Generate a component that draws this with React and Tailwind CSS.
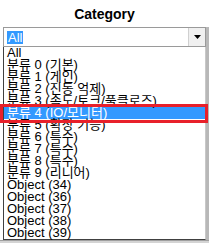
const items = [
  'All',
  '분류 0 (기본)',
  '분류 1 (게인)',
  '분류 2 (진동 억제)',
  '분류 3 (속도/토크/풀클로즈)',
  '분류 4 (IO/모니터)',
  '분류 5 (확장 기능)',
  '분류 6 (특수)',
  '분류 7 (특수)',
  '분류 8 (특수)',
  '분류 9 (리니어)',
  'Object (34)',
  'Object (36)',
  'Object (37)',
  'Object (38)',
  'Object (39)',
]

const selected = 5

export default function App() {
  return (
    <div
      className="relative w-[209px] h-[243px] overflow-hidden bg-white text-black"
      style={{ fontFamily: '"Liberation Sans", "Noto Sans CJK KR", sans-serif' }}
    >
      <div className="h-[27px] flex items-center justify-center text-[14px] font-bold pt-[1px]">
        Category
      </div>

      <div className="flex">
        <div className="w-[3px] bg-white" />
        <div className="w-[203px]">
          {/* closed select */}
          <div className="h-[20px] flex border border-[#9a9a9a]">
            <div className="flex-1 flex items-center pl-[3px] pt-[1px]">
              <span className="bg-[#3399ff] text-white text-[13px] leading-[13px] px-[1px]">All</span>
            </div>
            <div className="w-[17px] flex items-center justify-center bg-[#f0f0f0] border-l border-[#d0d0d0]">
              <svg width="7" height="4" viewBox="0 0 7 4">
                <path d="M0 0H7L3.5 4Z" fill="#000" />
              </svg>
            </div>
          </div>

          {/* open list */}
          <div className="border border-t-0 border-l-[#404040] border-r-[#c8c8c8] border-b-[#404040] bg-white">
            {items.map((item, i) => (
              <div
                key={item}
                className={`h-[12px] flex items-center pl-[3px] text-[13px] leading-[12px] whitespace-nowrap ${
                  i === selected ? 'bg-[#3399ff] text-white' : ''
                }`}
              >
                {item}
              </div>
            ))}
          </div>
        </div>
        <div className="w-[3px] bg-[#b8b8b8]" />
      </div>

      <div className="h-[10px] bg-[#d4d4d4] border-t border-[#a0a0a0]" />

      {/* red highlight annotation */}
      <div className="absolute left-0 top-[104px] w-[208px] h-[19px] border-[3px] border-[#e8202a]" />
    </div>
  )
}
